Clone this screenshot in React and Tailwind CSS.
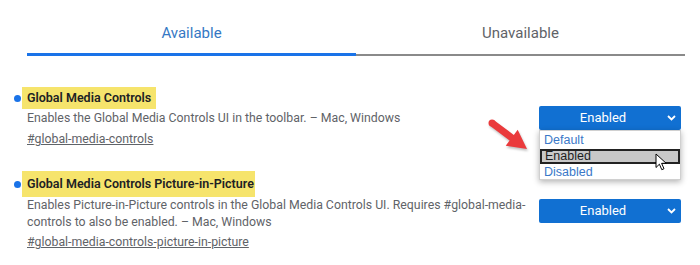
import { useState } from 'react'

const FLAGS = [
  {
    id: 'global-media-controls',
    title: 'Global Media Controls',
    desc: 'Enables the Global Media Controls UI in the toolbar. – Mac, Windows',
    hl: 'w-[134px] h-[22px] leading-[22px]',
    gap: 'mt-[31px]',
    descLead: 'leading-[18px]',
    linkGap: 'mt-[3px]',
    open: true,
  },
  {
    id: 'global-media-controls-picture-in-picture',
    title: 'Global Media Controls Picture-in-Picture',
    desc: 'Enables Picture-in-Picture controls in the Global Media Controls UI. Requires #global-media-controls to also be enabled. – Mac, Windows',
    hl: 'w-[233px] h-[26px] leading-[26px]',
    gap: 'mt-[23px]',
    descLead: 'leading-[17px]',
    linkGap: 'mt-[2px]',
    open: false,
  },
]

const OPTIONS = ['Default', 'Enabled', 'Disabled']

function Chevron() {
  return (
    <svg width="9" height="6" viewBox="0 0 9 6" className="mr-[5px]">
      <path d="M1 1l3.5 3.5L8 1" fill="none" stroke="white" strokeWidth="1.8"/>
    </svg>
  )
}

function RedArrow() {
  return (
    <svg width="50" height="40" viewBox="0 0 50 40"
      className="absolute left-[-55px] top-[8px] drop-shadow-[1px_2px_1px_rgba(0,0,0,0.25)]">
      <polygon
        points="10.1,6.2 29.8,20.9 33.7,15.7 43,35 21.7,31.7 25.6,26.5 5.9,11.8"
        fill="#ea3a3c"/>
      <circle cx="8" cy="9" r="3.5" fill="#ea3a3c"/>
    </svg>
  )
}

function Cursor() {
  return (
    <svg width="12" height="18" viewBox="0 0 12 18"
      className="absolute left-[115px] top-[22px]">
      <path d="M1 1v13.5l3.4-3.3 2.4 5.5 2.2-1-2.4-5.4h4.6z"
        fill="white" stroke="black" strokeWidth="1" strokeLinejoin="round"/>
    </svg>
  )
}

function Select({ open }) {
  const [value] = useState('Enabled')
  return (
    <div className="relative w-[142px] shrink-0">
      <div className="h-[24px] bg-[#1170d2] rounded-[2px] flex items-center">
        <span className="flex-1 text-center text-white text-[13px] leading-[24px]">
          {value}
        </span>
        <Chevron/>
      </div>
      {open && (
        <>
          <RedArrow/>
          <div className="absolute left-0 top-full w-[142px] h-[50px] bg-white
            border border-[#d0d0d0] shadow-[0_2px_6px_rgba(0,0,0,0.3)] pt-[1px]
            font-['Liberation_Sans',Arial,sans-serif] text-[12.5px]">
            {OPTIONS.map(o => o === value ? (
              <div key={o} className="mt-[1px] h-[15px] border-2 border-[#222]
                bg-[#c8c8c8] text-[#1e1e1e] leading-[11px] pl-[3px]">
                {o}
              </div>
            ) : (
              <div key={o} className="h-[16px] leading-[16px] text-[#3a78c8] pl-[4px]">
                {o}
              </div>
            ))}
            <Cursor/>
          </div>
        </>
      )}
    </div>
  )
}

export default function App() {
  return (
    <div className="w-[700px] h-[265px] bg-white overflow-hidden font-['Roboto',sans-serif]">
      {/* Tabs */}
      <div className="ml-[27px] w-[658px] flex pt-[23px]">
        <div className="flex-1 h-[33px] border-b-[3px] border-[#1a73e8]
          text-center text-[15px] leading-[20px] text-[#3578c4]">
          Available
        </div>
        <div className="flex-1 h-[33px] border-b-2 border-[#8a8a8a]
          text-center text-[15px] leading-[20px] text-[#5f6368]">
          Unavailable
        </div>
      </div>

      {/* Experiments */}
      {FLAGS.map(f => (
        <div key={f.id} className={`${f.gap} flex items-center pl-[14px] pr-[19px]`}>
          <div className="flex-1">
            <div className="flex items-center">
              <span className="w-[7px] h-[7px] rounded-full bg-[#1a73e8] mr-[1px]"/>
              <span className={`${f.hl} bg-[#f6e46c] px-[5px] text-[12.5px]
                font-semibold text-[#202124] whitespace-nowrap`}>
                {f.title}
              </span>
            </div>
            <p className={`ml-[13px] w-[500px] text-[12.3px] ${f.descLead} text-[#5f6368]`}>
              {f.desc}
            </p>
            <p className={`${f.linkGap} ml-[13px] text-[12.3px] leading-[18px]
              text-[#5f6368] underline`}>
              #{f.id}
            </p>
          </div>
          <Select open={f.open}/>
        </div>
      ))}
    </div>
  )
}
